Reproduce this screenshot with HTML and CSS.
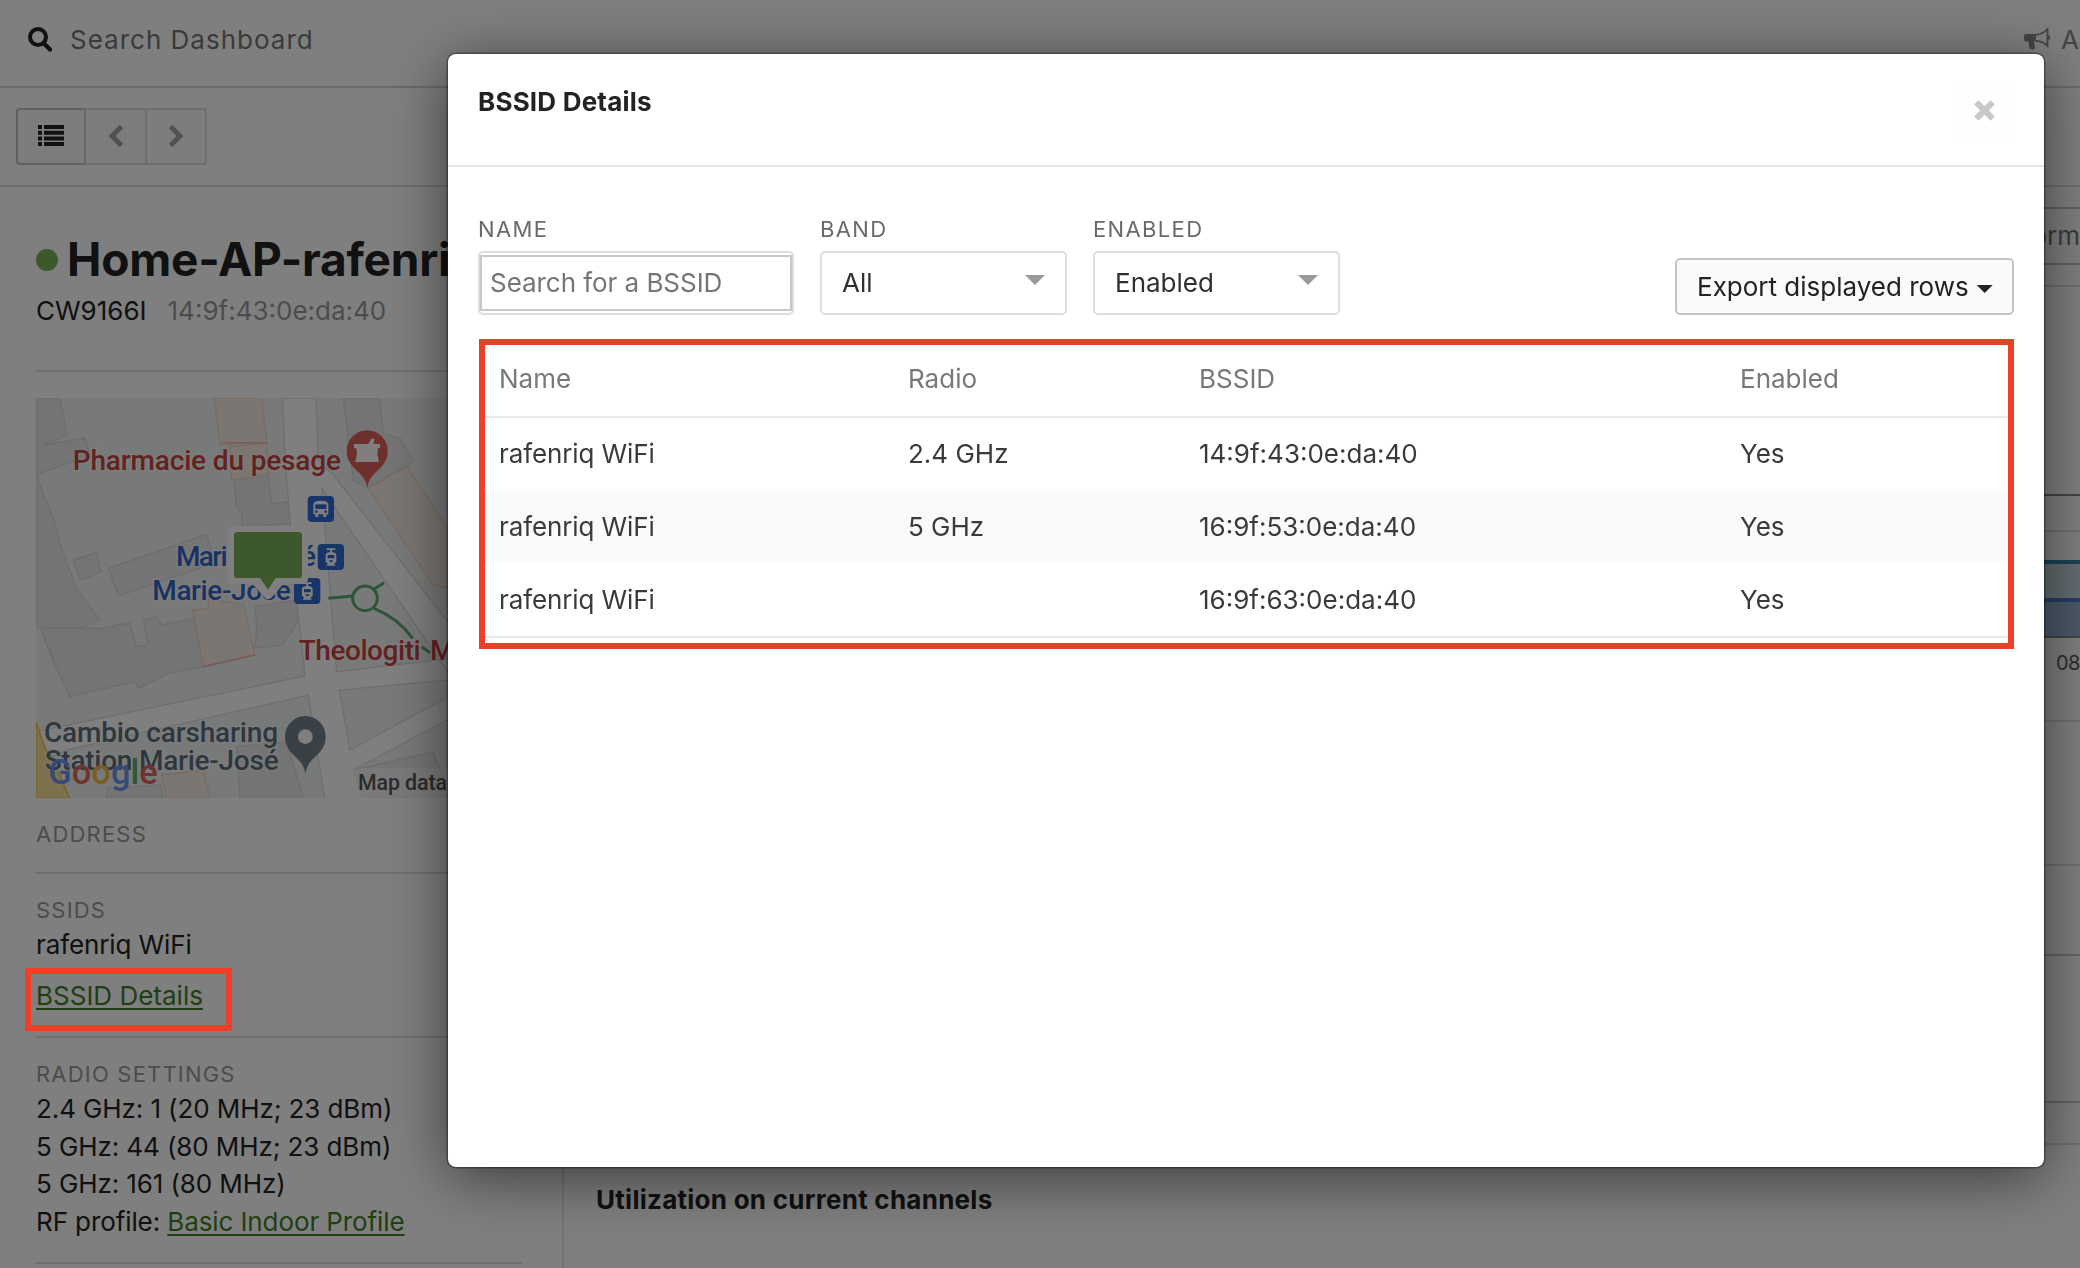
FILE: index.html
```html
<!DOCTYPE html>
<html lang="en">
<head>
<meta charset="utf-8">
<title>BSSID Details</title>
<link rel="stylesheet" href="styles.css">
</head>
<body>
<div class="page">
  <header class="topbar">
    <div class="search">
      <svg class="search-icon" viewBox="0 0 24 25"><circle cx="10" cy="10" r="8" fill="none" stroke="#222" stroke-width="4"/><path d="M16 16.500L22 22.500" stroke="#222" stroke-width="4.400" stroke-linecap="round"/></svg>
      <span class="search-text">Search Dashboard</span>
    </div>
    <div class="announce">
      <svg class="horn" viewBox="0 0 26 22"><path d="M2 6H12V13.500H10L11 20.500Q8.500 22.500 5.500 20.500L4.500 13.500H2Q0 13.500 0 11.500V8Q0 6 2 6Z" fill="#888"/><path d="M12 6.800Q19 6 23.500 1V18Q19 13 12 12.800" fill="none" stroke="#888" stroke-width="1.800"/><path d="M25 7.500v4" stroke="#888" stroke-width="2"/></svg>
      <span>A</span>
    </div>
  </header>
  <div class="toolbar">
    <div class="btn-group">
      <div class="tool tool-list"><svg width="26" height="21" viewBox="0 0 26 21"><path d="M0 0h4v4H0zM6 0h20v4H6zM0 5.700h4v4H0zM6 5.700h20v4H6zM0 11.400h4v4H0zM6 11.400h20v4H6zM0 17h4v4H0zM6 17h20v4H6z" fill="#222"/></svg></div>
      <div class="tool"><svg width="16" height="24" viewBox="0 0 16 24"><path d="M13.500 2.500L4 12l9.500 9.500" fill="none" stroke="#a0a3a6" stroke-width="5"/></svg></div>
      <div class="tool"><svg width="16" height="24" viewBox="0 0 16 24"><path d="M2.500 2.500L12 12l-9.500 9.500" fill="none" stroke="#a0a3a6" stroke-width="5"/></svg></div>
    </div>
  </div>
  <div class="columns">
    <aside class="sidebar">
      <div class="block block-title">
        <div class="title-row"><span class="status"></span><h1>Home-AP-rafenri</h1></div>
        <div class="model-row"><span class="model">CW9166I</span><span class="mac">14:9f:43:0e:da:40</span></div>
      </div>
      <div class="block block-map">
        <svg class="map" viewBox="48 54 1458 1200">
          <rect x="48" y="54" width="1458" height="1200" fill="#f1f5f2"/>
          <g fill="#e9e9e9" stroke="#dadada" stroke-width="4">
            <path d="M48 54H120L142 165 70 195 195 175 210 225 48 285Z"/>
            <path d="M48 285L100 415 125 505 170 625 240 720 175 745 250 745 265 790 105 855 60 745 48 740Z"/>
            <path d="M60 745L250 745 290 735 330 730 350 800 385 795 370 720 410 710 425 735 520 715 550 860 445 880 355 925 345 905 148 950Z"/>
            <path d="M160 540L228 517 245 575 180 602Z"/>
            <path d="M266 565L560 462 585 550 295 648Z" fill="#ebebef"/>
            <path d="M640 300L745 285 755 370 805 365 815 430 665 440 665 400 650 380Z"/>
            <path d="M705 680L830 660 840 700 820 750 785 795 705 805 710 740Z"/>
            <path d="M970 54H1080L1090 160 1140 175 1180 245 1040 325 1000 300Z"/>
            <path d="M650 1100L745 1090 800 1085 850 1254H660Z M1000 1170L1240 1115 1290 1254H1010Z M260 1254V1225L420 1215 430 1254Z"/>
          </g>
          <g fill="#f8ede4" stroke="#f3d6c2" stroke-width="4">
            <path d="M583 54H725L740 188 600 195Z"/>
            <path d="M630 200L740 190 745 285 635 300Z"/>
            <path d="M518 690L565 685V655L670 675 705 825 550 860Z"/>
            <path d="M1045 325L1160 260 1420 650 1240 615Z"/>
            <path d="M425 1185L550 1170 570 1254H440Z"/>
          </g>
          <g fill="#fff" stroke="#dcdcdc" stroke-width="4">
            <path d="M788 54H888L895 240 940 285 1506 1010V1200L905 325 950 875 1506 810V880L958 930 990 1110 1506 830V900L1000 1170 1030 1260H915L865 945 140 1110 48 1150V1055L855 888 830 660 795 240Z"/>
          </g>
          <path d="M550 860L705 825" stroke="#f0b5ad" stroke-width="5"/><path d="M602 188L740 188" stroke="#f0b5ad" stroke-width="4"/>
          <path d="M48 1025L75 1105 95 1130 148 1254H48Z" fill="#fbe29a" stroke="#f1c65e" stroke-width="5"/>
          <g fill="none" stroke="#5fa873" stroke-width="9"><circle cx="1035" cy="655" r="37"/><path d="M925 655L998 648M1062 628L1092 608M1062 685Q1135 715 1178 775M1205 800L1230 818"/></g>
          <g class="map-label">
            <text x="158" y="269" textLength="805" fill="#c5443e">Pharmacie du pesage</text>
            <text x="836" y="840" textLength="366" fill="#c5443e">Theologiti</text>
            <text x="1230" y="840" fill="#c5443e">M</text>
            <text x="468" y="557" fill="#3264c8" textLength="155">Mari</text>
            <text x="843" y="557" fill="#3264c8">é</text>
            <text x="397" y="660" fill="#3264c8" textLength="415">Marie-José</text>
            <text x="72" y="1085" fill="#5c6f7c" textLength="702">Cambio carsharing</text>
            <text x="74" y="1170" fill="#5c6f7c" textLength="702">Station Marie-José</text>
          </g>
          <path d="M1042 325C1036 270 980 270 980 212A61 61 0 0 1 1103 212C1103 270 1048 270 1042 325Z" fill="#dc6058"/>
          <path d="M1002 192H1045L1054 176H1064L1060 192H1080V205H1073Q1070 225 1077 246H1005Q1013 225 1009 205H1002Z" fill="#fff"/>
          <path d="M856 1182C850 1128 795 1128 795 1069A61 61 0 0 1 917 1069C917 1128 862 1128 856 1182Z" fill="#73838f"/><circle cx="856" cy="1070" r="22" fill="#fff"/>
          <g fill="#2f6ad2"><rect x="863" y="348" width="79" height="78" rx="12"/><rect x="893" y="492" width="79" height="78" rx="12"/><rect x="822" y="594" width="79" height="78" rx="12"/></g>
          <path d="M880 372Q882 362 903 362Q923 362 925 372V403H919V411H910V403H895V411H886V403H880Z" fill="#fff"/>
          <path d="M886 373H919V387H886Z" fill="#2f6ad2"/><circle cx="889" cy="395" r="4" fill="#2f6ad2"/><circle cx="917" cy="395" r="4" fill="#2f6ad2"/>
          <g id="tram"><path d="M920 505H946V510H936V516Q949 518 949 525V546L942 551L948 557H918L924 551L917 546V525Q917 518 930 516V510H920Z" fill="#fff"/><path d="M923 525H943V535H923ZM928 541H938V546H928Z" fill="#2f6ad2"/></g>
          <use href="#tram" x="-71" y="102"/>
          <path d="M640 438H848Q864 438 864 454V596Q864 612 848 612H790L757 650Q744 665 731 650L698 612H640Q624 612 624 596V454Q624 438 640 438Z" fill="#fff"/>
          <path d="M652 456H836Q846 456 846 466V584Q846 594 836 594H767L744 629 720 594H652Q642 594 642 584V466Q642 456 652 456Z" fill="#7ab356"/>
          <g class="map-logo"><text x="85" y="1212" textLength="328" lengthAdjust="spacingAndGlyphs"><tspan fill="#6b95ee">G</tspan><tspan fill="#e2665c">o</tspan><tspan fill="#f0bd47">o</tspan><tspan fill="#6b95ee">g</tspan><tspan fill="#62ab73">l</tspan><tspan fill="#e2665c">e</tspan></text></g>
          <rect x="1000" y="1165" width="506" height="89" fill="#fafafa" opacity=".7"/>
          <text class="map-credit" x="1014" y="1229" textLength="267">Map data</text>
        </svg>
        <h3>ADDRESS</h3>
      </div>
      <div class="block block-ssids">
        <h3>SSIDS</h3>
        <p>rafenriq WiFi</p>
        <p class="details"><a class="marked">BSSID Details</a></p>
      </div>
      <div class="block block-radio">
        <h3>RADIO SETTINGS</h3>
        <p>2.4 GHz: 1 (20 MHz; 23 dBm)</p>
        <p>5 GHz: 44 (80 MHz; 23 dBm)</p>
        <p>5 GHz: 161 (80 MHz)</p>
        <p>RF profile: <a>Basic Indoor Profile</a></p>
      </div>
    </aside>
    <main class="main">
      <div class="tabs"><div class="tab">orm</div></div>
      <div class="rule r1"></div>
      <div class="rule r2"></div>
      <div class="chart"><div class="area-a"></div><div class="area-b"></div></div>
      <div class="axis"><span>08</span></div>
      <div class="rule r3"></div>
      <div class="rule r4"></div>
      <div class="rule r5"></div>
      <div class="rule r6"></div>
      <h2>Utilization on current channels</h2>
    </main>
  </div>
</div>
<div class="backdrop">
  <section class="modal">
    <header class="modal-head">
      <h2>BSSID Details</h2>
      <div class="close"><svg width="21" height="21" viewBox="0 0 21 21"><path d="M2.300 2.300L18.700 18.700M18.700 2.300L2.300 18.700" stroke="#c8c8c8" stroke-width="6"/></svg></div>
    </header>
    <div class="modal-body">
      <div class="filters">
        <div class="field"><label>NAME</label><div class="box box-input"><div class="input">Search for a BSSID</div></div></div>
        <div class="field"><label>BAND</label><div class="box box-select"><span>All</span><i class="tri"></i></div></div>
        <div class="field"><label>ENABLED</label><div class="box box-select"><span>Enabled</span><i class="tri"></i></div></div>
        <div class="export"><span>Export displayed rows</span><i class="caret"></i></div>
      </div>
      <div class="table">
        <div class="tr th"><span>Name</span><span>Radio</span><span>BSSID</span><span>Enabled</span></div>
        <div class="tr"><span class="name">rafenriq WiFi</span><span>2.4 GHz</span><span>14:9f:43:0e:da:40</span><span>Yes</span></div>
        <div class="tr alt"><span class="name">rafenriq WiFi</span><span>5 GHz</span><span>16:9f:53:0e:da:40</span><span>Yes</span></div>
        <div class="tr last"><span class="name">rafenriq WiFi</span><span></span><span>16:9f:63:0e:da:40</span><span>Yes</span></div>
      </div>
    </div>
  </section>
</div>
</body>
</html>
```

FILE: styles.css
```css
*, *::before, *::after { box-sizing: border-box; }
html, body { margin: 0; height: 1268px; overflow: hidden; }
body { font-family: "Inter", "Liberation Sans", sans-serif; font-size: 26px; line-height: 38px; color: #222; background: #fff; }
h1, h2, h3, p { margin: 0; font-weight: 400; }
svg { display: block; }
.page { height: 1268px; overflow: hidden; display: flex; flex-direction: column; }

.topbar { height: 88px; flex: none; border-bottom: 2px solid #d4d4d4; display: flex; justify-content: space-between; align-items: flex-start; padding: 21px 0 0 28px; }
.search { display: flex; gap: 18px; }
.search-icon { width: 24px; height: 25px; margin-top: 6px; }
.search-text { color: #757575; letter-spacing: 1px; }
.announce { width: 56px; display: flex; gap: 11px; color: #888; }
.horn { width: 26px; height: 22px; margin-top: 7px; }

.toolbar { height: 99px; flex: none; border-bottom: 2px solid #dedede; padding: 20px 16px; }
.btn-group { display: flex; width: 191px; height: 57px; border-radius: 4px; }
.tool { width: 61px; border: 2px solid #dcdcdc; border-left: 0; background: #fbfbfb; display: flex; align-items: center; justify-content: center; padding-bottom: 2px; }
.tool:last-child { border-radius: 0 4px 4px 0; width: 60px; }
.tool-list { width: 70px; border: 2px solid #c2c2c2; border-right-color: #d4d4d4; border-radius: 4px 0 0 4px; }

.columns { display: flex; flex: 1; min-height: 0; }
.sidebar { width: 564px; flex: none; border-right: 2px solid #e4e4e4; padding: 0 40px 0 36px; }
.block { border-bottom: 2px solid #dedede; }
.block-title { height: 185px; padding-top: 43px; }
.title-row { display: flex; align-items: center; gap: 9px; height: 60px; }
.status { width: 22px; height: 22px; flex: none; border-radius: 50%; background: #7ab356; }
h1 { font-size: 46px; font-weight: 700; line-height: 60px; letter-spacing: -.2px; white-space: nowrap; padding-bottom: 3px; }
.model-row { display: flex; gap: 21px; margin-top: 2px; }
.mac { color: #999; }
.block-map { height: 502px; padding-top: 26px; }
.map { width: 486px; height: 400px; }
.map-label { font-family: Roboto, sans-serif; font-size: 84px; font-weight: 500; stroke: #fff; stroke-opacity: .6; stroke-width: 8px; paint-order: stroke; }
.map-logo { font-family: Roboto, sans-serif; font-size: 106px; font-weight: 500; }
.map-credit { font-family: Roboto, sans-serif; font-size: 64px; font-weight: 500; fill: #555; }
h3 { font-size: 22px; line-height: 32px; letter-spacing: 1.200px; color: #999; }
.block-map h3 { margin-top: 20px; }
.block-ssids { height: 164px; padding-top: 20px; }
.block-ssids p, .block-radio p { letter-spacing: -.1px; white-space: nowrap; }
.block-ssids .details { margin-top: 13px; letter-spacing: 0; }
a { color: #3f7e24; text-decoration: underline; text-decoration-thickness: 2px; text-underline-offset: 3px; text-decoration-skip-ink: none; }
.marked { position: relative; }
.marked::after { content: ""; position: absolute; left: -11px; top: -12px; width: 207px; height: 63px; border: 6px solid #ee4026; z-index: 20; }
.block-radio { height: 226px; padding-top: 20px; }
.block-radio p { line-height: 37.600px; }

.main { flex: 1; overflow: hidden; display: flex; flex-direction: column; }
.tabs { height: 100px; border-bottom: 2px solid #dedede; padding-top: 20px; flex: none; }
.tab { height: 58px; border: 2px solid #c2c2c2; border-right: 0; text-align: right; line-height: 54px; color: #777; }
.rule { flex: none; border-bottom: 2px solid #dedede; }
.r1 { height: 209px; border-color: #888; }
.r2 { height: 36px; }
.chart { flex: none; height: 106px; padding-top: 28px; border-bottom: 2px solid #888; display: flex; flex-direction: column; }
.area-a { height: 38px; border-top: 4px solid #3a85aa; background: #c6d9e2; }
.area-b { flex: 1; border-top: 4px solid #5078cc; background: #98b2d2; }
.axis { flex: none; height: 84px; padding-top: 7px; text-align: right; font-size: 20px; line-height: 36px; border-bottom: 2px solid #e2e2e2; color: #555; letter-spacing: -.5px; }
.r3 { height: 144px; }
.r4 { height: 90px; border-color: #c8c8c8; }
.r5 { height: 147px; border-color: #c8c8c8; }
.r6 { height: 42px; }
.main h2 { flex: none; margin: 36px 0 0 32px; font-size: 26px; font-weight: 700; line-height: 38px; letter-spacing: .26px; }

.backdrop { position: fixed; inset: 0; background: rgba(0, 0, 0, .5); padding: 54px 36px 0 448px; z-index: 10; }
.modal { width: 1596px; height: 1113px; background: #fff; border-radius: 8px; color: #303030; box-shadow: 0 0 0 1.500px rgba(0, 0, 0, .35), 0 10px 60px rgba(0, 0, 0, .55); }
.modal-head { height: 113px; border-bottom: 2px solid #e4e4e4; display: flex; justify-content: space-between; padding: 29px 31px 0 30px; }
.modal h2 { font-size: 26px; font-weight: 700; color: #222; letter-spacing: .2px; }
.close { width: 58px; height: 55px; display: flex; align-items: center; justify-content: center; background: #fefefe; }
.modal-body { padding: 46px 30px 0 30px; }
.filters { display: flex; gap: 26px; height: 102px; }
.field label { display: block; font-size: 22px; line-height: 32px; letter-spacing: 1.350px; color: #6a6a6a; height: 38px; }
.box { height: 64px; border: 2px solid #dedede; border-radius: 5px; }
.box-input { width: 316px; padding: 2px 0; }
.input { height: 56px; border: 2px solid #c8c8c8; line-height: 52px; padding-left: 8px; color: #757575; letter-spacing: -.05px; }
.box-select { width: 247px; display: flex; justify-content: space-between; padding: 11px 20px 0 20px; }
.tri { width: 20px; height: 10px; margin-top: 11px; background: #999; clip-path: polygon(0 0, 100% 0, 50% 100%); }
.export { margin: 45px 0 0 auto; width: 339px; height: 57px; border: 2px solid #c4c4c4; border-radius: 5px; background: #fafafa; color: #222; display: flex; gap: 8px; padding: 8px 0 0 20px; white-space: nowrap; }
.caret { width: 16px; height: 8px; margin-top: 17px; background: #222; clip-path: polygon(0 0, 100% 0, 50% 100%); }
.table { margin: 24px 0 0 1px; width: 1535px; height: 310px; border: 6px solid #ee4026; }
.tr { display: grid; grid-template-columns: 409px 291px 541px 1fr; height: 73px; padding: 17px 0 0 14px; color: #3a3a3a; }
.name { letter-spacing: -.1px; }
.th { color: #787878; border-bottom: 2px solid #e8e8e8; padding-top: 15px; }
.alt { background: #fafafa; height: 72px; }
.last { height: 75px; border-bottom: 2px solid #e8e8e8; padding-top: 18px; }
```
